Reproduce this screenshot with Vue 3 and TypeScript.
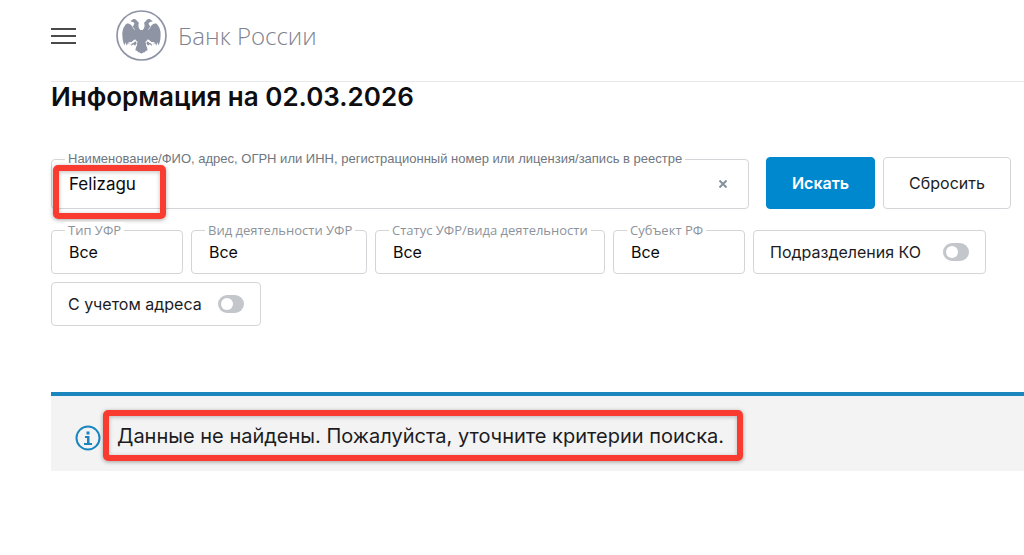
<script setup lang="ts">
import { reactive, ref } from 'vue'

interface Filter {
  id: string
  label: string
  size: string
}

const filters: Filter[] = [
  { id: 'type', label: 'Тип УФР', size: 'small' },
  { id: 'activity', label: 'Вид деятельности УФР', size: 'medium' },
  { id: 'status', label: 'Статус УФР/вида деятельности', size: 'large' },
  { id: 'region', label: 'Субъект РФ', size: 'small' },
]

const query = ref('Felizagu')
const selected = reactive<Record<string, string>>({
  type: 'Все',
  activity: 'Все',
  status: 'Все',
  region: 'Все',
})
const divisions = ref(false)
const withAddress = ref(false)

function reset(): void {
  query.value = ''
  filters.forEach((f) => (selected[f.id] = 'Все'))
  divisions.value = false
  withAddress.value = false
}
</script>

<template>
  <div class="page">
    <header class="header">
      <button class="menu" type="button" aria-label="Меню">
        <span></span><span></span><span></span>
      </button>
      <a class="brand" href="#">
        <svg class="emblem" viewBox="0 0 150 150" aria-hidden="true">
          <circle cx="75" cy="75" r="72" fill="none" stroke="#8f94a5" stroke-width="5" />
          <g fill="#8f94a5">
            <path d="M72 59C69 56 65 50 66 44C68 38 67 34 62 33C60 27 53 25 49 28L42 33L49 35C54 36 55 39 53 43L49 50C44 42 38 38 32 40C22 48 17 62 19 78C19 89 22 97 25 104L29 95L31 105L36 96L39 103L43 94L47 98L51 89L57 96L63 93C60 102 59 110 57 119C62 118 64 122 67 125C70 124 72 126 75 129C78 126 80 124 83 125C86 122 88 118 93 119C91 110 90 102 87 93L93 96L99 89L103 98L107 94L111 103L114 96L119 105L121 95L125 104C128 97 131 89 131 78C133 62 128 48 118 40C112 38 106 42 101 50L97 43C95 39 96 36 101 35L108 33L101 28C97 25 90 27 88 33C83 34 82 38 84 44C85 50 81 56 78 59Z" />
          </g>
          <path d="M49 50L55 58M101 50L95 58" fill="none" stroke="#fff" stroke-width="2" />
          <path d="M33 110L40 100L36 95L46 94L56 86L63 94L60 108L54 112L50 106L44 108L40 106ZM117 110L110 100L114 95L104 94L94 86L87 94L90 108L96 112L100 106L106 108L110 106Z" fill="#fff" />
          <path d="M57 92L61 97L56 105L51 101L45 105L43 102L49 99L45 97L51 97ZM93 92L89 97L94 105L99 101L105 105L107 102L101 99L105 97L99 97Z" fill="#8f94a5" />
        </svg>
        <span>Банк России</span>
      </a>
    </header>

    <main class="content">
      <h1>Информация на 02.03.2026</h1>

      <form @submit.prevent>
        <div class="search-row">
          <div class="field search">
            <label for="query">Наименование/ФИО, адрес, ОГРН или ИНН, регистрационный номер или лицензия/запись в реестре</label>
            <input id="query" v-model="query" type="text" />
            <button class="clear" type="button" aria-label="Очистить" @click="query = ''">
              <svg viewBox="0 0 8 8" aria-hidden="true"><path d="M0.5 0.5L7.5 7.5M7.5 0.5L0.5 7.5" /></svg>
            </button>
            <span class="mark mark-query"></span>
          </div>
          <div class="actions">
            <button class="btn primary" type="submit">Искать</button>
            <button class="btn" type="button" @click="reset">Сбросить</button>
          </div>
        </div>

        <div class="filters">
          <div v-for="f in filters" :key="f.id" class="field" :class="f.size">
            <label :for="f.id">{{ f.label }}</label>
            <select :id="f.id" v-model="selected[f.id]">
              <option>Все</option>
            </select>
          </div>
          <label class="toggle wide">
            <span>Подразделения КО</span>
            <input v-model="divisions" type="checkbox" role="switch" />
          </label>
          <label class="toggle">
            <span>С учетом адреса</span>
            <input v-model="withAddress" type="checkbox" role="switch" />
          </label>
        </div>
      </form>
    </main>

    <section class="notice" role="status">
      <svg class="info" viewBox="0 0 26 26" aria-hidden="true">
        <circle cx="13" cy="13" r="11.5" fill="none" stroke="#1a86c0" stroke-width="2" />
        <path d="M11.5 6.500h3v3h-3zM10 11h4.500v7h2.500v2h-8v-2h3v-5h-2z" fill="#1a86c0" />
      </svg>
      <p>
        Данные не найдены. Пожалуйста, уточните критерии поиска.
        <span class="mark mark-message"></span>
      </p>
    </section>
  </div>
</template>

<style>
body {
  margin: 0;
  background: #fff;
}
</style>

<style scoped>
.page,
.page * {
  box-sizing: border-box;
}

.page {
  font-family: Inter, "Noto Sans", "Liberation Sans", sans-serif;
  font-size: 16px;
  line-height: 20px;
  color: #1c1c1f;
  padding-left: 51px;
}

button,
input,
select {
  font: inherit;
  color: inherit;
  margin: 0;
}

.header {
  display: flex;
  align-items: center;
  gap: 40px;
  padding: 10px 0 20px;
  border-bottom: 1px solid #e8e8ea;
}

.menu {
  display: flex;
  flex-direction: column;
  gap: 5px;
  width: 25px;
  padding: 0;
  border: 0;
  background: none;
}

.menu span {
  height: 2px;
  background: #4a4a4c;
}

.brand {
  display: flex;
  align-items: center;
  gap: 11px;
  color: #80838f;
  font-family: "Open Sans", "Noto Sans", sans-serif;
  font-size: 24px;
  font-weight: 300;
  line-height: 32px;
  text-decoration: none;
}

.emblem {
  width: 51px;
  height: 51px;
}

.content {
  padding-right: 13px;
}

h1 {
  margin: 0;
  font-size: 26px;
  line-height: 30px;
  font-weight: 600;
  color: #0e0e10;
}

.search-row {
  display: flex;
  align-items: flex-end;
  gap: 17px;
  margin-top: 45px;
}

.field {
  position: relative;
  height: 44px;
  border: 1px solid #d3d5d8;
  border-radius: 4px;
}

.field label {
  position: absolute;
  top: -9px;
  left: 13px;
  padding: 0 3px;
  background: #fff;
  font-family: "Open Sans", "Noto Sans", sans-serif;
  font-size: 13px;
  line-height: 16px;
  color: #8d939b;
  white-space: nowrap;
}

.field input,
.field select {
  display: block;
  width: 100%;
  height: 100%;
  padding: 0 17px;
  border: 0;
  background: none;
  color: #0a0a0a;
  appearance: none;
  outline: 0;
}

.search {
  flex: 1;
  display: flex;
  align-items: center;
  height: 50px;
}

.search label {
  color: #70767e;
  font-family: "Liberation Sans", sans-serif;
}

.search input {
  font-size: 17px;
}

.clear {
  flex: none;
  display: flex;
  align-items: center;
  justify-content: center;
  width: 50px;
  height: 48px;
  padding: 0;
  border: 0;
  background: none;
}

.clear svg {
  width: 8px;
  height: 8px;
  fill: none;
  stroke: #83929b;
  stroke-width: 2;
}

.actions {
  display: flex;
  gap: 8px;
}

.btn {
  width: 128px;
  height: 52px;
  padding: 0;
  border: 1px solid #d3d5d8;
  border-radius: 4px;
  background: #fff;
}

.primary {
  width: 109px;
  border-color: #0088cf;
  background: #0088cf;
  color: #fff;
  font-weight: 600;
}

.filters {
  display: flex;
  flex-wrap: wrap;
  gap: 8px;
  margin-top: 21px;
}

.small {
  width: 132px;
}

.medium {
  width: 176px;
}

.large {
  width: 230px;
}

.toggle {
  display: flex;
  align-items: center;
  justify-content: space-between;
  width: 210px;
  height: 44px;
  padding: 0 16px;
  border: 1px solid #d3d5d8;
  border-radius: 4px;
}

.wide {
  width: 233px;
}

.toggle input {
  display: flex;
  align-items: center;
  width: 26px;
  height: 18px;
  padding: 0 3px;
  border-radius: 9px;
  background: #c3c7cb;
  appearance: none;
}

.toggle input::before {
  content: "";
  width: 12px;
  height: 12px;
  border-radius: 50%;
  background: #fff;
}

.toggle input:checked {
  justify-content: flex-end;
  background: #0088cf;
}

.notice {
  display: flex;
  align-items: center;
  gap: 16px;
  margin-top: 66px;
  padding: 24px 24px 16px;
  border-top: 4px solid #1a86bd;
  background: #f3f3f3;
}

.info {
  flex: none;
  width: 26px;
  height: 26px;
}

.notice p {
  position: relative;
  margin: 0;
  padding-bottom: 3px;
  font-size: 20px;
  line-height: 32px;
  white-space: nowrap;
}

.mark {
  position: absolute;
  border: 6px solid #f93b30;
  border-radius: 5px;
  box-shadow: 0 1px 4px rgba(0, 0, 0, 0.35), inset 0 1px 4px rgba(0, 0, 0, 0.25);
  pointer-events: none;
}

.mark-query {
  top: 5px;
  left: 1px;
  width: 113px;
  height: 54px;
}

.mark-message {
  top: -10px;
  left: -14px;
  right: -19px;
  height: 51px;
}
</style>
